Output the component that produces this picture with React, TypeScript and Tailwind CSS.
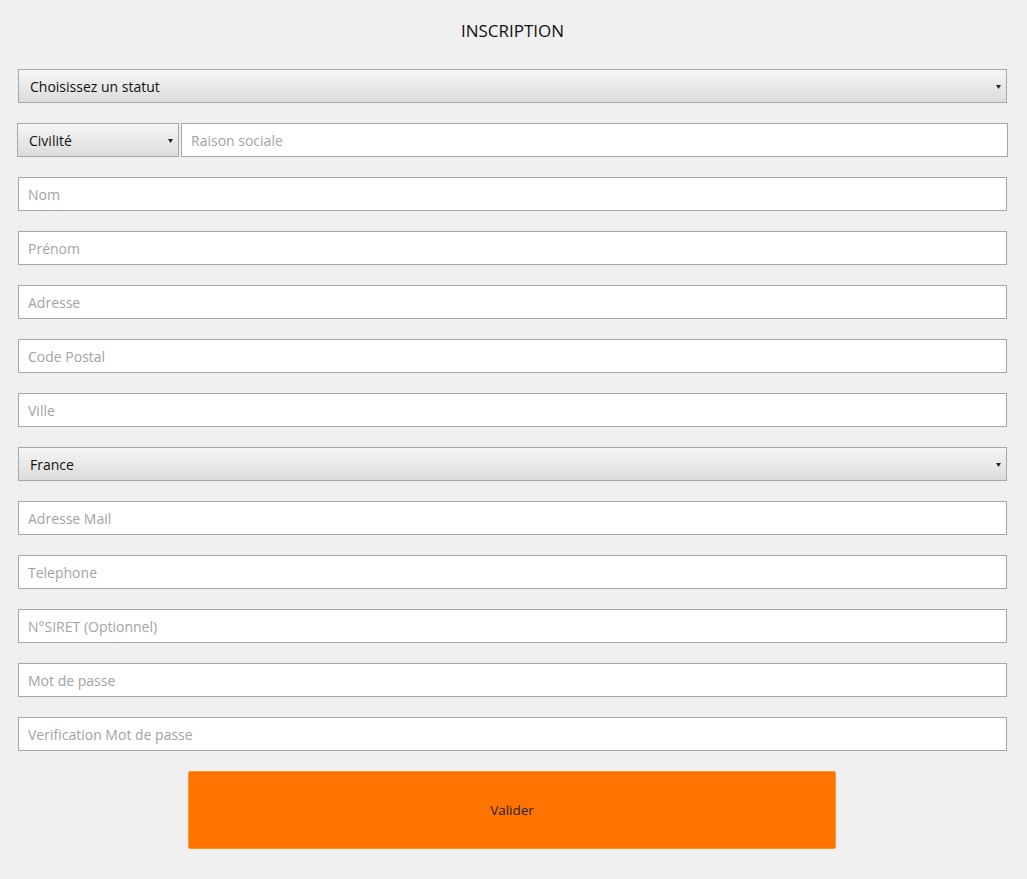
const font = { fontFamily: '"Open Sans", "DejaVu Sans", sans-serif' };

const fields = [
  "Nom",
  "Prénom",
  "Adresse",
  "Code Postal",
  "Ville",
];

const fields2 = [
  "Adresse Mail",
  "Telephone",
  "N°SIRET (Optionnel)",
  "Mot de passe",
  "Verification Mot de passe",
];

function Select({ label, className = "" }: { label: string; className?: string }) {
  return (
    <div
      className={`flex h-[34px] items-center justify-between border border-[#a6a6a6] bg-gradient-to-b from-[#f6f6f6] to-[#dcdcdc] pl-[11px] pr-[5px] text-[14px] text-[#111] ${className}`}
    >
      <span>{label}</span>
      <svg width="5" height="4" viewBox="0 0 5 4" className="mt-[1px]">
        <path d="M0 0h5L2.5 4z" fill="#222" />
      </svg>
    </div>
  );
}

function Field({ placeholder }: { placeholder: string }) {
  return (
    <input
      placeholder={placeholder}
      className="h-[34px] w-full border border-[#a6a6a6] bg-white px-[9px] text-[14px] text-[#111] outline-none placeholder:text-[#a3a3a3]"
      style={font}
    />
  );
}

export default function App() {
  return (
    <div className="min-h-[879px] bg-[#f0f0f0] pl-[18px] pr-[20px] pt-[19px]" style={font}>
      <h1 className="mb-[26px] text-center text-[17px] leading-[24px] text-[#111]">INSCRIPTION</h1>

      <div className="flex flex-col gap-[20px]">
        <Select label="Choisissez un statut" />

        <div className="-mx-[1px] flex gap-[2px]">
          <Select label="Civilité" className="w-[162px] shrink-0" />
          <Field placeholder="Raison sociale" />
        </div>

        {fields.map((f) => (
          <Field key={f} placeholder={f} />
        ))}

        <Select label="France" />

        {fields2.map((f) => (
          <Field key={f} placeholder={f} />
        ))}

        <button
          type="button"
          className="ml-[170px] h-[78px] w-[648px] self-start rounded-[2px] border border-[#ff9a1a] bg-[#ff7400] text-[13.5px] text-[#222]"
          style={font}
        >
          Valider
        </button>
      </div>
    </div>
  );
}
